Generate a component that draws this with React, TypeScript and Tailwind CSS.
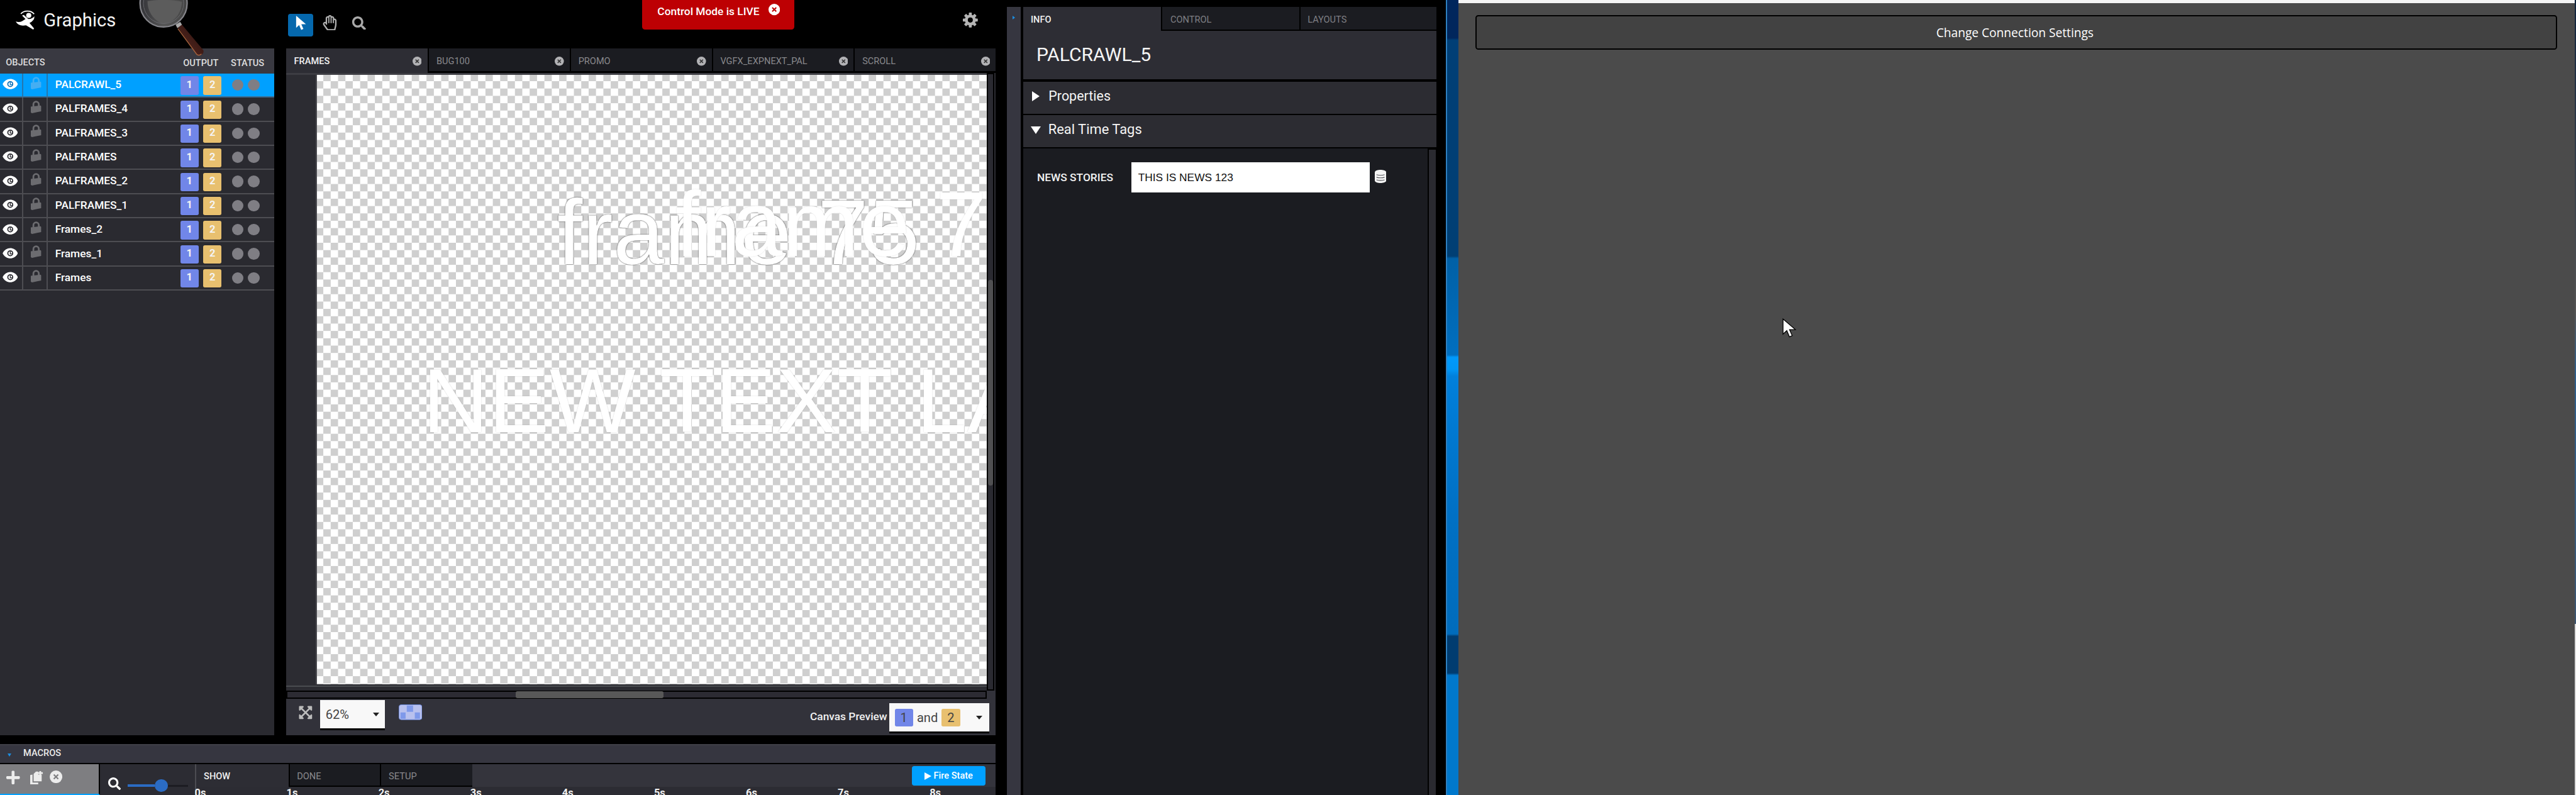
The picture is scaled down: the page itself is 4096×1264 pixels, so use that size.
import React from "react";
import { FaSearch, FaRegHandPaper, FaExpandArrowsAlt, FaPlus } from "react-icons/fa";

const objects = [
  "PALCRAWL_5",
  "PALFRAMES_4",
  "PALFRAMES_3",
  "PALFRAMES",
  "PALFRAMES_2",
  "PALFRAMES_1",
  "Frames_2",
  "Frames_1",
  "Frames",
];
const canvasTabs = ["FRAMES", "BUG100", "PROMO", "VGFX_EXPNEXT_PAL", "SCROLL"];
const seconds = ["0s", "1s", "2s", "3s", "4s", "5s", "6s", "7s", "8s"];

function CloseDot({ className }: { className: string }) {
  return (
    <svg viewBox="0 0 20 20" className={className}>
      <circle cx="10" cy="10" r="10" fill="currentColor" />
      <path d="M6.5 6.5l7 7M13.5 6.5l-7 7" className="stroke-[var(--x)]" strokeWidth="2.2" />
    </svg>
  );
}

function Pointer({ className, outline }: { className: string; outline?: boolean }) {
  return (
    <svg viewBox="0 0 20 28" className={className}>
      <path
        d="M1 1v22l5.5-5 3.8 9 4-1.8-3.8-8.7H19z"
        fill="#fff"
        stroke={outline ? "#000" : "none"}
        strokeWidth="1.2"
      />
    </svg>
  );
}

function Runner() {
  return (
    <svg viewBox="0 0 34 34" className="ml-[27px] mt-[17px] h-[34px] w-[34px]">
      <circle cx="22.700" cy="9.300" r="4.500" fill="#fff" />
      <path d="M9 6.500C14 0 27 0 32 7" fill="none" stroke="#fff" strokeWidth="2" />
      <path
        d="M0 20Q6 22 11 19.500L17 15.500 11 9.500 14 8.500 22 15.500Q28 16 32.500 11 33 18 24 22.500L32 32 30.500 34 18 26.500Q5 29 0 20z"
        fill="#fff"
      />
    </svg>
  );
}

function Magnifier() {
  return (
    <svg viewBox="0 0 120 100" className="ml-[38px] h-[100px] w-[120px]">
      <defs>
        <linearGradient id="lens" x1="0" y1="0" x2="1" y2="0">
          <stop offset="0" stopColor="#333337" />
          <stop offset="0.5" stopColor="#565656" />
          <stop offset="1" stopColor="#444" />
        </linearGradient>
        <linearGradient id="handle" x1="0" y1="1" x2="1" y2="0">
          <stop offset="0" stopColor="#9a4a2c" />
          <stop offset="0.4" stopColor="#47201a" />
          <stop offset="1" stopColor="#2a120e" />
        </linearGradient>
      </defs>
      <path d="M70 48l7-5 37 44c3 6-5 12-11 8z" fill="url(#handle)" />
      <path d="M70 50l33 45c3 2 6 1 8-1" fill="none" stroke="#a5623c" strokeWidth="1.6" />
      <path d="M66 43l8-5 3 5-8 6z" fill="#a9a9a9" />
      <circle cx="45" cy="6" r="41" fill="url(#lens)" stroke="#85858a" strokeWidth="2.5" />
      <path d="M17 2c18-3 42-3 60 1-1 20-12 35-32 39C27 36 17 20 17 2z" fill="#5c5c5c" />
      <circle cx="45" cy="6" r="35" fill="none" stroke="#6a6a6e" strokeWidth="1" />
    </svg>
  );
}

function Gear() {
  return (
    <svg viewBox="-13 -13 26 26" className="h-[26px] w-[26px]" fill="#b4b4b4">
      {[0, 45, 90, 135].map((a) => (
        <rect key={a} x="-2.600" y="-13" width="5.200" height="26" rx="1" transform={`rotate(${a})`} />
      ))}
      <circle r="9.500" />
      <circle r="4.400" fill="#000" />
    </svg>
  );
}

function Eye() {
  return (
    <svg viewBox="0 0 28 20" className="h-[19px] w-[27px]">
      <path d="M0 10C6 -2.500 22 -2.500 28 10 22 22.500 6 22.500 0 10z" fill="#fff" />
      <circle cx="14" cy="10" r="4.500" fill="none" stroke="currentColor" strokeWidth="2" />
      <path d="M14 7v4h4" fill="none" stroke="currentColor" strokeWidth="1.500" />
    </svg>
  );
}

function Lock() {
  return (
    <svg viewBox="0 0 18 22" className="h-[22px] w-[18px]">
      <path d="M4.500 11V6.500a4.700 4.700 0 0 1 9.400 0V11" fill="none" stroke="currentColor" strokeWidth="3" />
      <path d="M0 10.500l17-2 1 1v9l-7 1.500-9 2-2-1.500z" fill="currentColor" />
    </svg>
  );
}

function ObjectRow({ name, selected }: { name: string; selected: boolean }) {
  return (
    <div
      className={
        selected
          ? "flex h-[42px] border-b-[2.2px] border-[#3b6d93] bg-[#00a0ff] text-[#0a6fb8]"
          : "flex h-[42px] border-b-[2.2px] border-[#4d4d52] bg-[#2a2a30] text-[#2a2a30]"
      }
    >
      <div
        className={
          selected
            ? "flex w-[41px] items-center border-r-[2.2px] border-[#2676ad] pb-[2px] pl-[4px]"
            : "flex w-[41px] items-center border-r-[2.2px] border-[#4d4d52] pb-[2px] pl-[4px]"
        }
      >
        <Eye />
      </div>
      <div
        className={
          selected
            ? "flex w-[42px] items-center border-r-[2.2px] border-[#2676ad] pb-[7px] pl-[13px] text-[#45aef2]"
            : "flex w-[42px] items-center border-r-[2.2px] border-[#4d4d52] pb-[7px] pl-[13px] text-[#6c6c70]"
        }
      >
        <Lock />
      </div>
      <div className="flex w-[231px] items-center pb-[2px] pl-[13px] text-[19px] font-medium text-white">{name}</div>
      <div className="flex items-center gap-[8px] pt-[2px] text-[18px] font-bold text-[#f4f4f4]">
        <span className="flex h-[32px] w-[32px] items-center justify-center rounded-[3px] bg-[#7186e8] pb-[2px]">1</span>
        <span className="flex h-[32px] w-[32px] items-center justify-center rounded-[3px] bg-[#e8c06f] pb-[2px]">2</span>
      </div>
      <div className="flex items-center gap-[8px] pl-[18px]">
        <span className="h-[20px] w-[20px] rounded-full bg-[#7f7e84]" />
        <span className="h-[20px] w-[20px] rounded-full bg-[#7f7e84]" />
      </div>
    </div>
  );
}

function ObjectsPanel() {
  return (
    <div className="flex w-[478px] flex-col bg-[#2a2a30]">
      <div className="flex h-[44px] items-center bg-[#393941] text-[16px] font-medium text-[#dedede]">
        <span className="w-[319px] pl-[10px] pt-[7px]">OBJECTS</span>
        <span className="w-[83px] pt-[10px]">OUTPUT</span>
        <span className="pt-[10px]">STATUS</span>
      </div>
      {objects.map((name, i) => (
        <ObjectRow key={name} name={name} selected={i === 0} />
      ))}
    </div>
  );
}

function Caret() {
  return <span className="h-0 w-0 border-x-[6px] border-t-[7px] border-x-transparent border-t-[#222]" />;
}

function CanvasPanel() {
  return (
    <div className="flex w-[1236px] flex-col">
      <div className="flex h-[43px] gap-[2px] text-[16px]">
        {canvasTabs.map((tab, i) => (
          <div
            key={tab}
            className={
              i === 0
                ? "flex h-[43px] w-[247px] items-center justify-between bg-[#2d2d34] pl-[14px] pr-[11px] pt-[3px] font-medium text-[#f2f2f2]"
                : "flex h-[40px] flex-1 items-center justify-between bg-[#1b1c21] pl-[13px] pr-[10px] pt-[6px] text-[#88888c]"
            }
          >
            <span>{tab}</span>
            <CloseDot className="h-[16px] w-[16px] text-[#b2b2b5] [--x:#333]" />
          </div>
        ))}
      </div>
      <div className="flex h-[1076px] bg-[#2c2c32]">
        <div className="flex w-[1220px] flex-col">
          <div className="h-[3px] bg-[#3d3d43]" />
          <div className="flex h-[1062px]">
            <div className="w-[54px] border-r-[2.2px] border-[#4a4a4f]" />
            <div className="relative h-[1062px] w-[1166px] overflow-hidden bg-white bg-[conic-gradient(#cfcfcf_25%,#fff_0_50%,#cfcfcf_0_75%,#fff_0)] bg-[length:25.67px_25.6px] bg-[position:-1.800px_-1.800px] font-['Liberation_Sans',sans-serif] text-white">
              <span className="absolute left-[418px] top-[195px] whitespace-pre text-[160px] leading-none [text-shadow:0_0_2px_rgba(0,0,0,.9)]">
                frame 75
              </span>
              <span className="absolute left-[624px] top-[181px] whitespace-pre text-[160px] leading-none [text-shadow:0_0_2px_rgba(0,0,0,.15)]">
                frame 7
              </span>
              <span className="absolute left-[184px] top-[489px] whitespace-pre text-[159px] leading-none [text-shadow:0_0_2px_rgba(0,0,0,.2)]">
                NEW TEXT LA
              </span>
            </div>
          </div>
          <div className="mt-[2px] h-[2px] bg-[#4a4c50]" />
        </div>
        <div className="flex w-[14px] flex-col border-[2.2px] border-black bg-[#2a2a31]">
          <div className="mt-[358px] h-[358px] rounded-[5px] bg-[#505052]" />
        </div>
      </div>
      <div className="flex h-[14px] bg-[#32323a]">
        <div className="w-[1220px] border-[2.2px] border-black bg-[#2c2b33]">
          <div className="-mt-[1px] ml-[398px] h-[12px] w-[257px] rounded-[3px] bg-[#585858]" />
        </div>
      </div>
      <div className="flex h-[63px] items-start bg-[#32323a]">
        <FaExpandArrowsAlt className="ml-[21px] mt-[11px] h-[26px] w-[26px] text-[#bcbcbc]" />
        <div className="ml-[13px] mt-[2px] flex h-[53px] w-[112px] items-center justify-between border-b-[3.3px] border-black bg-[#f8f8f8] pl-[9px] pr-[10px] text-[22px] text-[#444]">
          <span>62%</span>
          <Caret />
        </div>
        <svg viewBox="0 0 41 27" className="ml-[24px] mt-[10px] h-[27px] w-[41px]">
          <rect x="0.500" y="0.500" width="40" height="26" rx="4" fill="#b9c1ee" stroke="#6f8fe6" />
          <path d="M14 2h11v11H14zM3 14h9v11H3zM28 14h9v11h-9z" fill="#7f99ea" />
        </svg>
        <div className="ml-auto mr-[4px] mt-[16px] text-[19px] font-medium text-[#f0f0f0]">Canvas Preview</div>
        <div className="mr-[11px] mt-[8px] flex h-[52px] w-[174px] items-center border-b-[3.3px] border-black bg-[#f8f8f8] pl-[9px] text-[22px] text-[#444]">
          <span className="flex h-[31px] w-[32px] items-center justify-center rounded-[3px] bg-[#7186e8]">1</span>
          <span className="w-[50px] text-center">and</span>
          <span className="mr-[28px] flex h-[31px] w-[32px] items-center justify-center rounded-[3px] bg-[#e8c06f]">2</span>
          <Caret />
        </div>
      </div>
    </div>
  );
}

function MacrosPanel() {
  return (
    <div className="mt-[16px] flex h-[88px] w-[1734px] flex-col">
      <div className="flex h-[32px] items-center border-t-[2.2px] border-[#3f3f47] bg-[#363640]">
        <span className="ml-[13px] mt-[3px] h-0 w-0 border-x-[4px] border-t-[6px] border-x-transparent border-t-[#1d8de0]" />
        <span className="ml-[21px] pb-[1px] text-[16px] font-medium text-[#eaeaea]">MACROS</span>
      </div>
      <div className="flex h-[56px] border-t-[2.2px] border-black bg-[#2c2c33]">
        <div className="flex w-[174px] shrink-0 items-start border-b-[2.2px] border-r-[2.2px] border-b-[#00a0ff] border-r-black bg-[#7e7e81] text-[#ececec]">
          <FaPlus className="ml-[9px] mt-[10px] h-[27px] w-[28px]" />
          <svg viewBox="0 0 23 25" className="ml-[16px] mt-[11px] h-[25px] w-[23px]" fill="currentColor">
            <path d="M0 8l4-1v14h10v3H0zM6 6l4-4h4v5h6v12H6zM16 1h3v6h-3zM14 3h8v3h-8z" />
          </svg>
          <CloseDot className="ml-[11px] mt-[11px] h-[22px] w-[22px] [--x:#7e7e81]" />
        </div>
        <div className="flex w-[168px] shrink-0 items-start border-r-[2.2px] border-[#4c4c52]">
          <FaSearch className="ml-[14px] mt-[24px] h-[22px] w-[22px] shrink-0 text-white" />
          <div className="ml-[12px] mt-[27px] flex items-center">
            <div className="h-[4px] w-[48px] bg-[#2b6cc4]" />
            <div className="h-[22px] w-[22px] rounded-full bg-[#2b6cc4]" />
            <div className="h-[3px] w-[36px] bg-[#1c1c22]" />
          </div>
        </div>
        <div className="flex min-w-0 flex-1 flex-col">
          <div className="flex h-[40px] bg-[#34343c] text-[16px] text-[#8a8a8e]">
            <div className="flex w-[161px] items-center bg-[#2d2d34] pl-[13px] pt-[5px] font-medium text-[#f0f0f0]">SHOW</div>
            <div className="flex w-[161px] items-center border-x-[2.2px] border-b-[2.2px] border-black bg-[#1b1c21] pl-[12px] pt-[7px]">
              DONE
            </div>
            <div className="flex w-[158px] items-center border-b-[2.2px] border-black bg-[#1b1c21] pl-[13px] pt-[7px]">SETUP</div>
            <div className="ml-auto mr-[18px] mt-[4px] flex h-[34px] w-[128px] items-center justify-center gap-[4px] rounded-[4px] bg-[#00a0ff] text-[16px] font-medium text-white">
              <span className="h-0 w-0 border-y-[7px] border-l-[13px] border-y-transparent border-l-white" />
              <span>Fire State</span>
            </div>
          </div>
          <div className="-ml-[3px] flex h-[14px] overflow-hidden text-[18px] font-bold leading-[18px] text-[#f2f2f2]">
            {seconds.map((s) => (
              <span key={s} className="w-[160px] shrink-0 pt-[2px]">
                {s}
              </span>
            ))}
          </div>
        </div>
      </div>
    </div>
  );
}

function TopBar() {
  return (
    <div className="flex h-[84px] items-start">
      <Runner />
      <div className="ml-[15px] mt-[16px] w-[126px] text-[32px] leading-[38px] text-[#f5f5f5]">Graphics</div>
      <div className="z-10 w-[300px]">
        <Magnifier />
      </div>
      <div className="mt-[24px] flex h-[39px] w-[44px] justify-center rounded-[4px] bg-[#0568ad] pt-[2px]">
        <Pointer className="h-[27px] w-[19px]" />
      </div>
      <FaRegHandPaper className="ml-[15px] mt-[26px] h-[27px] w-[27px] text-[#b0b0b0]" />
      <FaSearch className="ml-[24px] mt-[28px] h-[24px] w-[26px] text-[#a9a9a9]" />
      <div className="ml-[480px] flex h-[51px] w-[265px] items-start rounded-b-[5px] bg-[#bd0003] pl-[27px] pt-[9px] text-[19px] font-medium leading-[24px] text-white">
        <span className="w-[193px] whitespace-nowrap">Control Mode is LIVE</span>
        <CloseDot className="-mt-[2px] h-[20px] w-[20px] [--x:#bd0003]" />
      </div>
      <div className="ml-[294px] mt-[22px]">
        <Gear />
      </div>
    </div>
  );
}

function InfoPanel() {
  return (
    <div className="flex w-[720px] flex-col pt-[12px]">
      <div className="flex h-[42px] text-[16px] text-[#7f7f84]">
        <div className="flex w-[240px] items-center bg-[#2d2d34] pl-[13px] pt-[3px] font-medium text-[#f0f0f0]">INFO</div>
        <div className="flex w-[241px] items-center border-b-[2.2px] border-l-[2.2px] border-black bg-[#1b1c21] pl-[14px] pt-[6px]">
          CONTROL
        </div>
        <div className="flex w-[239px] items-center border-b-[2.2px] border-l-[2.2px] border-black bg-[#1b1c21] pl-[12px] pt-[6px]">
          LAYOUTS
        </div>
      </div>
      <div className="flex h-[84px] items-center bg-[#2d2d34] pb-[2px] pl-[23px] text-[33px] text-[#f5f5f5]">PALCRAWL_5</div>
      <div className="mt-[4px] flex h-[56px] items-center bg-[#2c2c32] pb-[4px] pl-[15px] text-[23.500px] text-[#f5f5f5]">
        <span className="mr-[16px] h-0 w-0 border-y-[9px] border-l-[14px] border-y-transparent border-l-white" />
        Properties
      </div>
      <div className="mt-[3px] flex h-[55px] items-center bg-[#2c2c32] pb-[4px] pl-[13px] text-[24px] text-[#f5f5f5]">
        <span className="mr-[13px] h-0 w-0 border-x-[9px] border-t-[14px] border-x-transparent border-t-white" />
        Real Time Tags
      </div>
      <div className="mt-[3px] flex flex-1">
        <div className="flex w-[704px] items-start bg-[#1b1c21] pt-[24px]">
          <span className="w-[188px] pl-[24px] pt-[14px] text-[19px] font-medium leading-[26px] text-[#f2f2f2]">NEWS STORIES</span>
          <div className="flex h-[52px] w-[415px] items-center bg-white pl-[12px] font-['Liberation_Sans',sans-serif] text-[19px] text-[#111]">
            THIS IS NEWS 123
          </div>
          <svg viewBox="0 0 20 23" className="ml-[9px] mt-[13px] h-[23px] w-[20px]">
            <path d="M0 4.500C0 -1.500 20 -1.500 20 4.500V18.500C20 24.500 0 24.500 0 18.500z" fill="#f4f4f4" />
            <path d="M3 8.500q7 2 14 0M3 13q7 2 14 0M3 17.500q7 2 14 0" fill="none" stroke="#55555a" strokeWidth="1.200" />
          </svg>
        </div>
        <div className="ml-[2px] mt-[2px] w-[12px] bg-[#2a2a30]" />
      </div>
    </div>
  );
}

function SettingsWindow() {
  return (
    <div className="relative flex w-[1944px] flex-col items-center border-t-[5.500px] border-[#f5f5f5] bg-[#4b4b4b] pt-[21px]">
      <div className="-ml-[1px] flex h-[60px] w-[1884px] items-center justify-center rounded-[5px] border-[2.2px] border-black bg-[#424242] pr-[5px] pt-[2px] font-['Open_Sans','Noto_Sans',sans-serif] text-[21px] text-white">
        Change Connection Settings
      </div>
      <Pointer outline className="absolute left-[564px] top-[547px] h-[38px] w-[24px]" />
    </div>
  );
}

export default function App() {
  return (
    <div className="h-[1264px] w-[4096px] overflow-hidden bg-black">
      <div className="flex h-[1385px] w-[4487px] bg-black font-[Roboto,sans-serif] [zoom:0.91306]">
        <div className="flex w-[1734px] flex-col">
          <TopBar />
          <div className="flex h-[1196px] justify-between">
            <ObjectsPanel />
            <CanvasPanel />
          </div>
          <MacrosPanel />
        </div>
        <div className="ml-[20px] mr-[4px] mt-[12px] w-[24px] bg-[#363640] pl-[9px] pt-[15px]">
          <div className="h-0 w-0 border-y-[4px] border-l-[5px] border-y-transparent border-l-[#1d8de0]" />
        </div>
        <InfoPanel />
        <div className="ml-[16px] w-[22px] border-l-[2.2px] border-[#2f80c0] bg-[linear-gradient(#00265c_66px,#003f76_70px,#003f74_446px,#0060a6_450px,#006fc0_618px,#0099fb_622px,#0096f5_643px,#0080dc_655px,#0078d0_760px,#0070c4_900px,#006cbc_1104px,#003c70_1108px,#003c70_1172px,#0078cc_1176px)]" />
        <SettingsWindow />
        <div className="flex w-[3px] flex-col">
          <div className="h-[1087px] bg-[linear-gradient(#10233c,#555_50%,#2f5f8c_60%,#3d5670)]" />
          <div className="flex-1 bg-[#dcdcdc]" />
        </div>
      </div>
    </div>
  );
}
